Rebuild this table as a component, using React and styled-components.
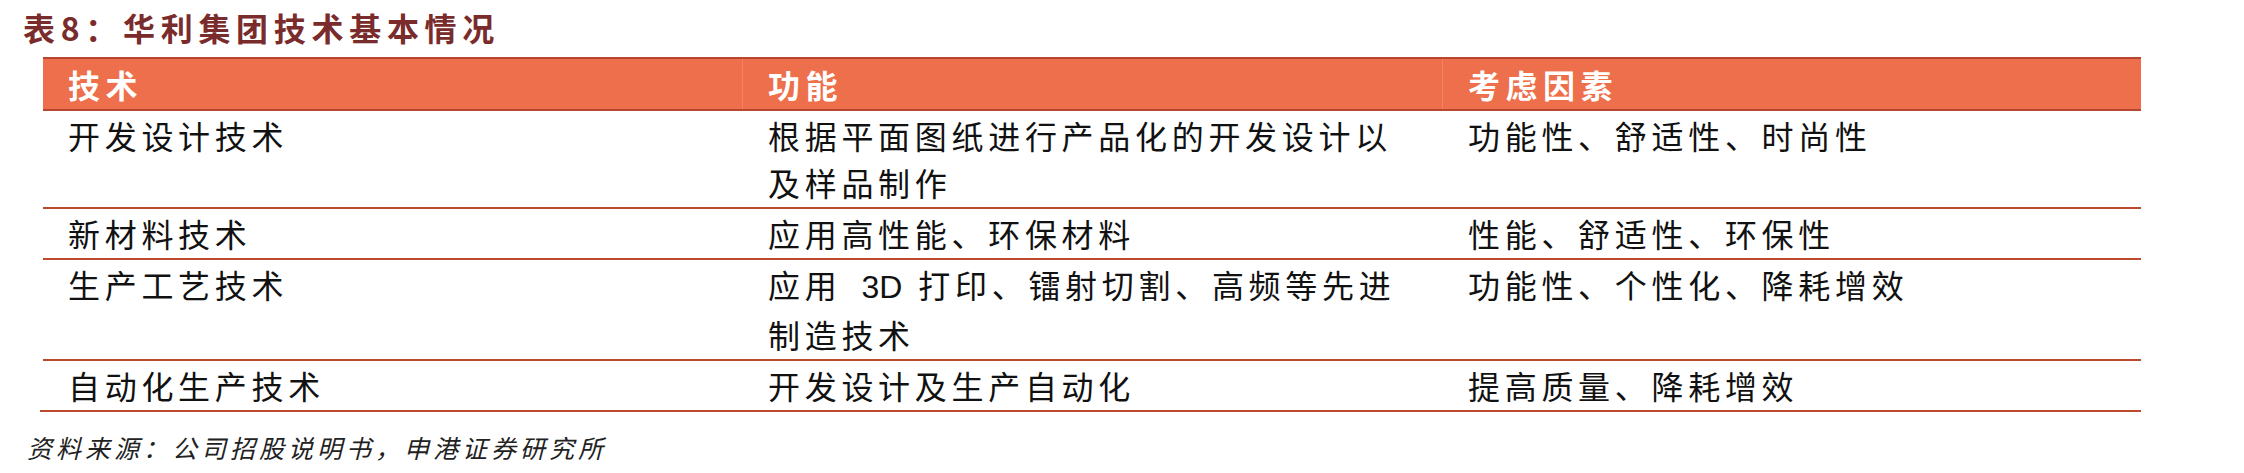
import React from 'react'
import styled, { createGlobalStyle } from 'styled-components'

const GlobalStyle = createGlobalStyle`
  html, body {
    margin: 0;
    padding: 0;
    background: #fff;
  }
  body {
    font-family: 'Noto Sans CJK SC', 'Noto Sans', sans-serif;
    color: #111;
  }
`

const Page = styled.div`
  width: 2244px;
  height: 473px;
  padding-top: 9px;
  box-sizing: border-box;
  overflow: hidden;
`

const Title = styled.h1`
  margin: 0 0 12px 23px;
  font-size: 32px;
  line-height: 36px;
  font-weight: 700;
  letter-spacing: 5.7px;
  color: #7a2b2b;
`

const Table = styled.div`
  margin-left: 43px;
  width: 2098px;
  display: flex;
  flex-direction: column;
`

const HeadRow = styled.div`
  display: grid;
  grid-template-columns: 700px 700px 698px;
  height: 54px;
  box-sizing: border-box;
  background: #ee6f4c;
  border-top: 2px solid #b8472d;
  border-bottom: 2px solid #b8472d;
`

const HeadCell = styled.div`
  display: flex;
  align-items: center;
  padding-left: 25px;
  font-size: 32px;
  font-weight: 700;
  letter-spacing: 5.5px;
  color: #fff;
  border-left: ${p => (p.$first ? 'none' : '1px solid rgba(255, 255, 255, 0.14)')};
  margin-left: ${p => (p.$first ? '0' : '-1px')};
`

const Row = styled.div`
  display: grid;
  grid-template-columns: 700px 700px 698px;
  border-bottom: 2px solid #bb4a2e;
  margin-left: ${p => (p.$last ? '-3px' : '0')};
  padding-left: ${p => (p.$last ? '3px' : '0')};
`

const Cell = styled.div`
  padding: 1px 25px 1px 25px;
  font-size: 32px;
  line-height: 47px;
  letter-spacing: 4.7px;
  color: #111;
`

const Latin = styled.span`
  font-family: 'Liberation Sans', Arial, sans-serif;
  font-size: 32px;
  letter-spacing: 0;
  margin: 0 16px 0 20px;
`

const Source = styled.p`
  margin: 20px 0 0 27px;
  font-size: 25px;
  line-height: 30px;
  letter-spacing: 4px;
  font-style: italic;
  color: #222;
`

const rows = [
  {
    tech: '开发设计技术',
    func: (
      <>
        根据平面图纸进行产品化的开发设计以
        <br />
        及样品制作
      </>
    ),
    factor: '功能性、舒适性、时尚性',
  },
  { tech: '新材料技术', func: '应用高性能、环保材料', factor: '性能、舒适性、环保性' },
  {
    tech: '生产工艺技术',
    func: (
      <>
        应用<Latin>3D</Latin>打印、镭射切割、高频等先进
        <br />
        制造技术
      </>
    ),
    factor: '功能性、个性化、降耗增效',
  },
  { tech: '自动化生产技术', func: '开发设计及生产自动化', factor: '提高质量、降耗增效' },
]

const App = () => (
  <>
    <GlobalStyle />
    <Page>
      <Title>表8：华利集团技术基本情况</Title>
      <Table>
        <HeadRow>
          <HeadCell $first>技术</HeadCell>
          <HeadCell>功能</HeadCell>
          <HeadCell>考虑因素</HeadCell>
        </HeadRow>
        {rows.map((r, i) => (
          <Row key={r.tech} $last={i === rows.length - 1}>
            <Cell>{r.tech}</Cell>
            <Cell>{r.func}</Cell>
            <Cell>{r.factor}</Cell>
          </Row>
        ))}
      </Table>
      <Source>资料来源：公司招股说明书，申港证券研究所</Source>
    </Page>
  </>
)

export default App
